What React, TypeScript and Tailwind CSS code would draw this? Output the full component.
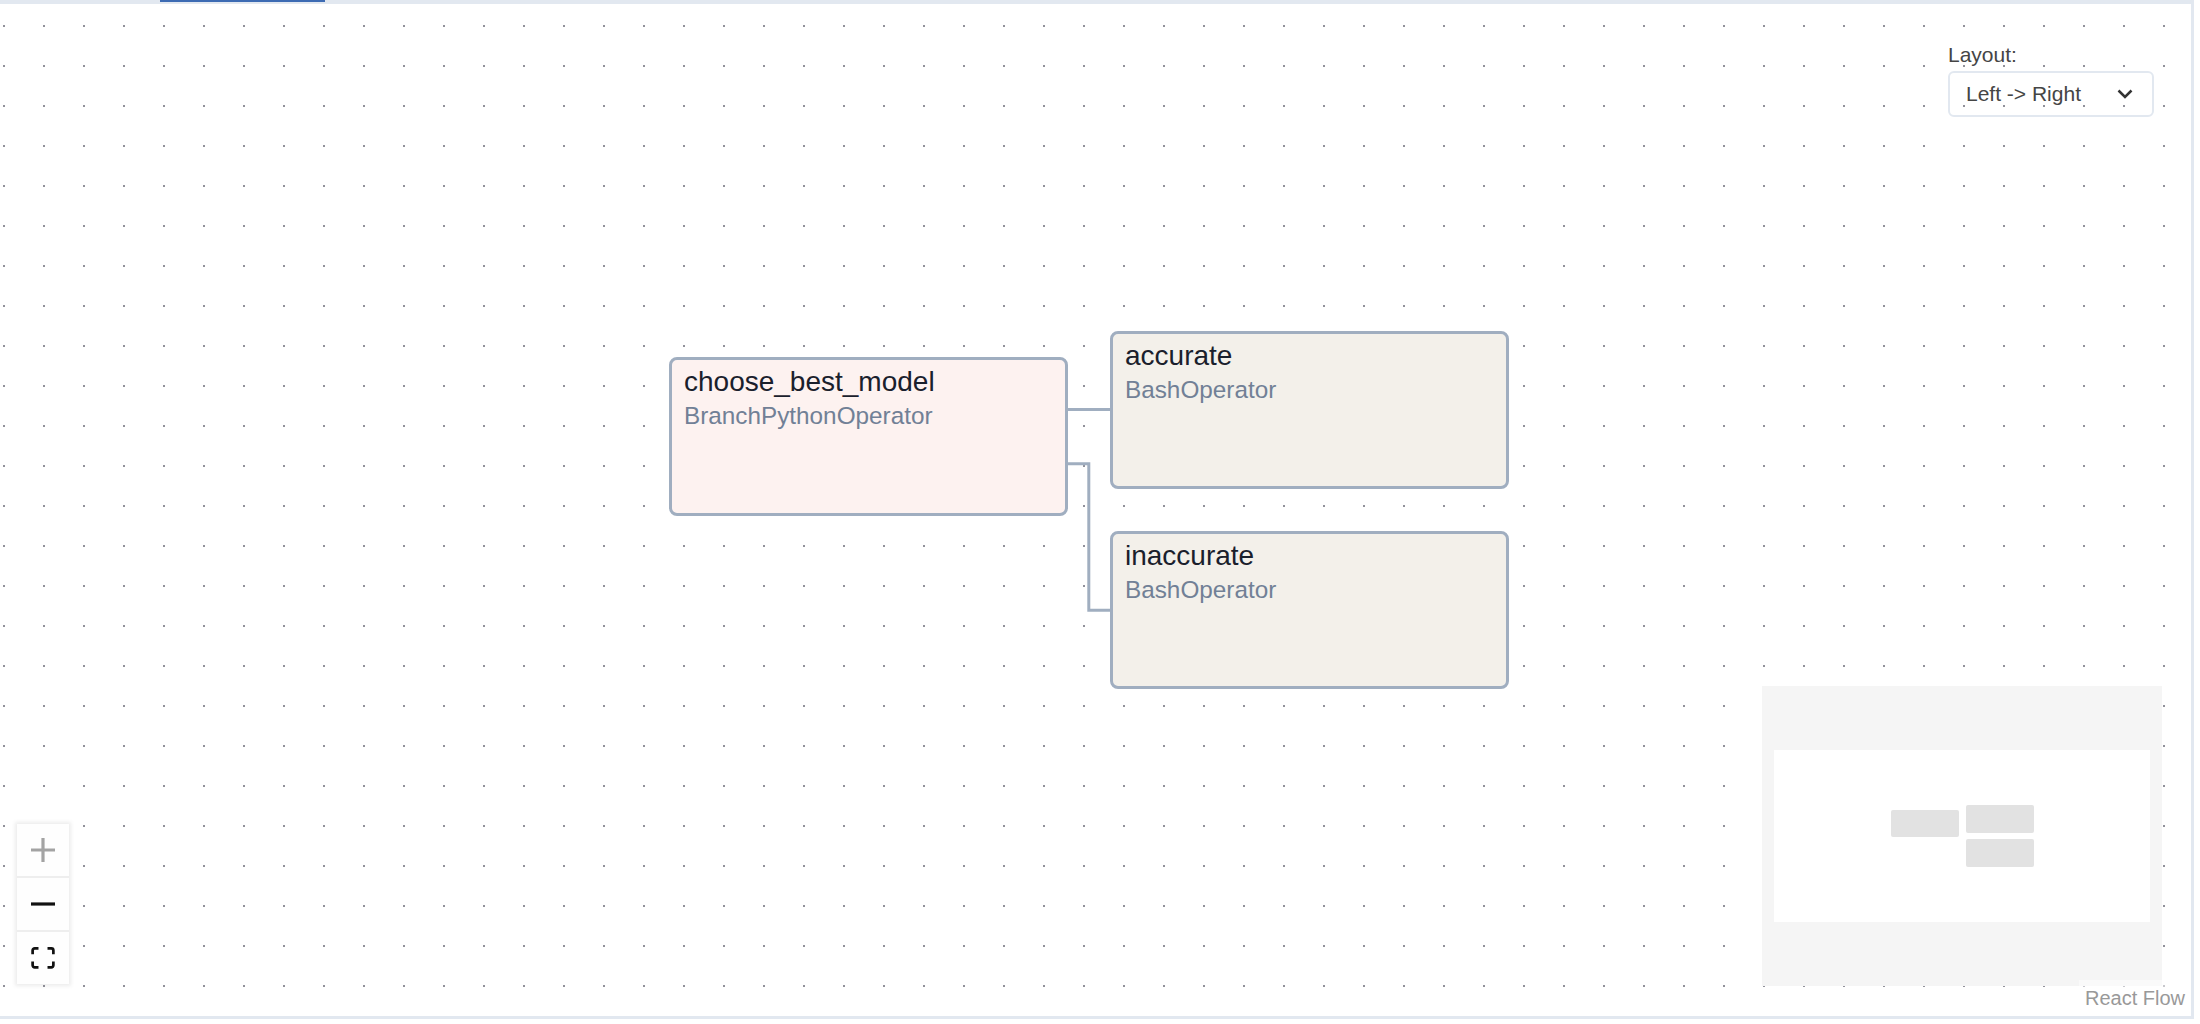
import React from 'react'

type TaskNode = {
  id: string
  operator: string
  left: number
  top: number
  height: number
  bg: string
}

const nodes: TaskNode[] = [
  { id: 'choose_best_model', operator: 'BranchPythonOperator', left: 669, top: 353, height: 159, bg: 'bg-[#fdf2f0]' },
  { id: 'accurate', operator: 'BashOperator', left: 1110, top: 327, height: 158, bg: 'bg-[#f3f0ea]' },
  { id: 'inaccurate', operator: 'BashOperator', left: 1110, top: 527, height: 158, bg: 'bg-[#f3f0ea]' },
]

function DotGrid() {
  return (
    <svg className="absolute inset-0 w-full h-full" aria-hidden>
      <defs>
        <pattern id="dots" x="0" y="0" width="40" height="40" patternUnits="userSpaceOnUse">
          <rect x="3" y="21" width="2" height="2" fill="#91919a" />
        </pattern>
      </defs>
      <rect width="100%" height="100%" fill="url(#dots)" />
    </svg>
  )
}

function Edges() {
  return (
    <svg className="absolute inset-0 w-full h-full" aria-hidden>
      <path d="M1068 405.5 H1111" stroke="#a0aec0" strokeWidth={3} fill="none" />
      <path d="M1068 459.7 H1088.8 V606.3 H1111" stroke="#a0aec0" strokeWidth={3} fill="none" />
    </svg>
  )
}

function Node({ node }: { node: TaskNode }) {
  return (
    <div
      className={`absolute w-[399px] border-[3px] border-[#a0aec0] rounded-[8px] pl-[12px] pt-[2px] ${node.bg}`}
      style={{ left: node.left, top: node.top, height: node.height }}
    >
      <div className="text-[28px] leading-[40px] text-[#1a202c]">{node.id}</div>
      <div className="text-[24.3px] leading-[27px] text-[#718096]">{node.operator}</div>
    </div>
  )
}

function Controls() {
  return (
    <div className="absolute left-[17px] top-[820px] w-[52px] bg-[#fefefe] shadow-[0_0_4px_2px_rgba(0,0,0,0.08)]">
      <button className="w-[52px] h-[54px] flex items-center justify-center border-b-2 border-[#eeeeee]">
        <svg width="24" height="24" viewBox="0 0 32 32" fill="#a3a3a3">
          <path d="M32 18.133H18.133V32h-4.266V18.133H0v-4.266h13.867V0h4.266v13.867H32z" />
        </svg>
      </button>
      <button className="w-[52px] h-[54px] flex items-center justify-center border-b-2 border-[#eeeeee]">
        <svg width="24" height="24" viewBox="0 0 32 32" fill="#111">
          <path d="M0 13.867h32v4.266H0z" />
        </svg>
      </button>
      <button className="w-[52px] h-[52px] flex items-center justify-center">
        <svg width="24" height="22" viewBox="0 0 32 30" fill="#111">
          <path d="M3.692 4.63c0-.53.4-.938.939-.938h5.215V0H4.708C2.13 0 0 2.054 0 4.63v5.216h3.692V4.631zM27.354 0h-5.2v3.692h5.17c.53 0 .984.4.984.939v5.215H32V4.631A4.624 4.624 0 0027.354 0zm.954 24.83c0 .532-.4.94-.939.94h-5.215v3.768h5.215c2.577 0 4.631-2.13 4.631-4.707v-5.139h-3.692v5.139zm-23.677.94c-.531 0-.939-.4-.939-.94v-5.138H0v5.139c0 2.577 2.13 4.707 4.708 4.707h5.138V25.77H4.631z" />
        </svg>
      </button>
    </div>
  )
}

function MiniMap() {
  return (
    <div className="absolute right-[29px] bottom-[30px] w-[400px] h-[300px] bg-[#f5f5f5]">
      <svg width="400" height="300" viewBox="0 0 400 300">
        <rect x="12" y="64" width="376" height="172" fill="#ffffff" />
        <rect x="129" y="124" width="68" height="27" rx="2" fill="#e2e2e2" />
        <rect x="204" y="119" width="68" height="28" rx="2" fill="#e2e2e2" />
        <rect x="204" y="153" width="68" height="28" rx="2" fill="#e2e2e2" />
      </svg>
    </div>
  )
}

function LayoutSelect() {
  return (
    <div className="absolute right-[37px] top-[39px] w-[206px] flex flex-col text-[#454545]">
      <label className="text-[21px] leading-[24px] mb-[4px]">Layout:</label>
      <div className="h-[46px] border-2 border-[#e2e8f0] rounded-[6px] flex items-center justify-between pl-[16px] pr-[19px]">
        <span className="text-[21px]">Left -&gt; Right</span>
        <svg width="16" height="10" viewBox="0 0 16 10" fill="none">
          <path d="M1.5 1.5 L8 8 L14.5 1.5" stroke="#333" strokeWidth={2.5} />
        </svg>
      </div>
    </div>
  )
}

export default function App() {
  return (
    <div className="w-[2200px] h-[1024px] bg-white font-['Liberation_Sans',Arial,sans-serif]">
      <div className="w-[2194px]">
        <div className="h-[4px] bg-[#e2e8f0]">
          <div className="ml-[160px] w-[165px] h-[2px] bg-[#3d6bb3]" />
        </div>
        <div className="relative h-[1015px] border-r-[3px] border-b-[3px] border-[#e2e8f0] overflow-hidden">
          <DotGrid />
          <Edges />
          {nodes.map((n) => (
            <Node key={n.id} node={n} />
          ))}
          <LayoutSelect />
          <Controls />
          <MiniMap />
          <div className="absolute right-0 bottom-0 px-[6px] py-[4px] bg-white/50 text-[20px] leading-[28px] text-[#999]">
            React Flow
          </div>
        </div>
      </div>
    </div>
  )
}
